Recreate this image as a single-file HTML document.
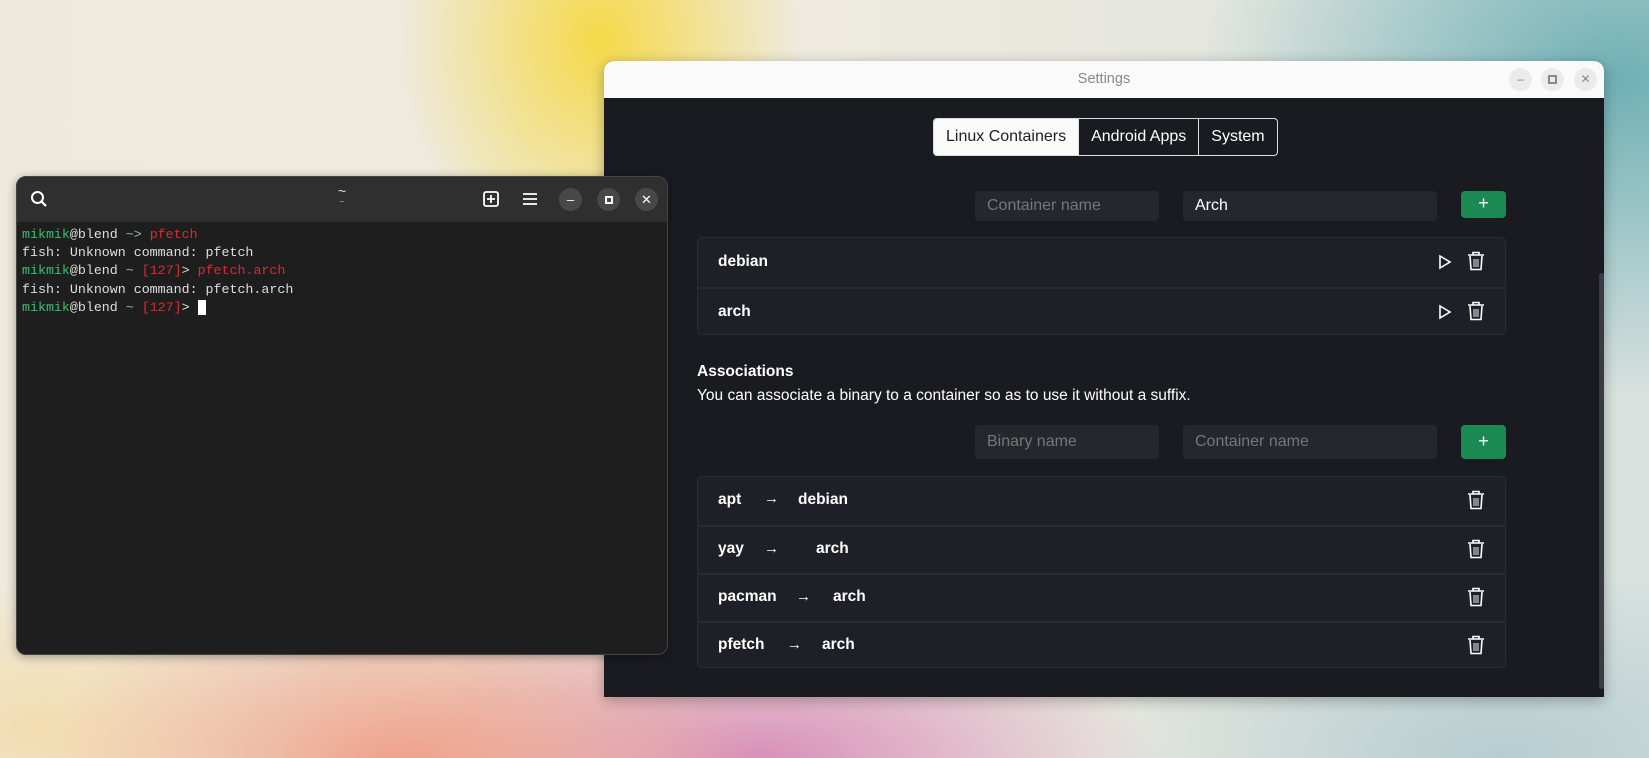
<!DOCTYPE html>
<html><head><meta charset="utf-8"><style>
*{margin:0;padding:0;box-sizing:border-box}
body{width:1649px;height:758px;overflow:hidden;position:relative;font-family:"Liberation Sans",sans-serif;
background:
radial-gradient(ellipse 200px 240px at 600px 40px,#f5d94a 0%,rgba(245,217,74,0) 100%),
radial-gradient(ellipse 420px 320px at 1620px 80px,#6fb0b5 0%,rgba(111,176,181,0) 100%),
radial-gradient(ellipse 360px 200px at 400px 770px,#ef9f86 0%,rgba(239,159,134,0) 100%),
radial-gradient(ellipse 400px 160px at 760px 760px,#d88fb8 0%,rgba(216,143,184,0) 100%),
radial-gradient(ellipse 400px 200px at 1500px 758px,#b6cdd0 0%,rgba(182,205,208,0) 100%),
radial-gradient(ellipse 250px 150px at 40px 730px,#f3ddb0 0%,rgba(243,221,176,0) 100%),
linear-gradient(90deg,#eeeadb 0%,#eeeadf 50%,#d9e2df 100%);}
.term{position:absolute;z-index:2;left:16px;top:176px;width:652px;height:479px;background:#1e1e1e;border-radius:10px;overflow:hidden;box-shadow:0 2px 10px rgba(0,0,0,.35);border:1px solid #444}
.th{height:45px;background:#2f2f2f;position:relative}
.cb{position:absolute;top:11px;width:23px;height:23px;border-radius:50%;background:#484848;color:#fff;font-size:13px;text-align:center;line-height:23px}
.tb{padding:4px 5px;font-family:"Liberation Mono",monospace;font-size:13.3px;line-height:18.2px;color:#dedede;white-space:pre}
.g{color:#33c173}.r{color:#e0282f}.d{color:#8fbf9c}
.set{position:absolute;z-index:1;left:604px;top:61px;width:1000px;height:636px;background:#1a1a21;border-radius:10px 10px 0 0;overflow:hidden;box-shadow:0 3px 14px rgba(0,0,0,.3)}
.sh{height:37px;background:#fafafa;text-align:center;line-height:37px;color:#888;font-size:14.5px;position:relative}
.wb{position:absolute;top:7px;width:23px;height:23px;border-radius:50%;background:#ebebeb;color:#888;font-size:12px;line-height:23px;text-align:center}
.tabs{position:absolute;left:329px;top:57px;height:38px;display:flex;border:1px solid #ddd;border-radius:4px;overflow:hidden;font-size:16px}
.tabs div{padding:0 12px;line-height:36px;color:#fff}
.tabs div+div{border-left:1px solid #ddd}
.inp{position:absolute;height:30px;background:#26262e;border-radius:4px;color:#fff;font-size:16px;line-height:30px;padding-left:12px}
.ph{color:#777}
.btn{position:absolute;width:45px;background:#1b8a52;border-radius:4px;color:#fff;text-align:center;font-size:18px}
.list{position:absolute;left:93px;width:809px;background:#1f1f27;border:1px solid #2c2c33;border-radius:5px}
.row{position:relative;border-top:2px solid #2a2a31;color:#fff;font-weight:bold;font-size:15.5px}
.row:first-child{border-top:none}
.row span{position:absolute}
.row span.a{font-size:15px;top:13px!important}
.ic{position:absolute}
.sb{position:absolute;left:995px;top:212px;width:5px;height:416px;background:#3a3a42;border-radius:3px}
</style></head><body>
<div class="term">
 <div class="th">
  <svg style="position:absolute;left:13px;top:13px" width="18" height="18" viewBox="0 0 18 18"><circle cx="7.5" cy="7.5" r="5.5" fill="none" stroke="#fff" stroke-width="2"/><line x1="11.5" y1="11.5" x2="16" y2="16" stroke="#fff" stroke-width="2.2"/></svg>
  <div style="position:absolute;left:321px;top:6px;color:#ddd;font-size:14px">~</div>
  <div style="position:absolute;left:322px;top:20px;color:#999;font-size:10px">~</div>
  <svg style="position:absolute;left:465px;top:13px" width="18" height="18" viewBox="0 0 18 18"><rect x="2" y="2" width="14" height="14" rx="2" fill="none" stroke="#fff" stroke-width="1.8"/><path d="M9 5v8M5 9h8" stroke="#fff" stroke-width="1.8"/></svg>
  <svg style="position:absolute;left:505px;top:14px" width="16" height="16" viewBox="0 0 16 16"><path d="M1 3h14M1 8h14M1 13h14" stroke="#fff" stroke-width="1.8"/></svg>
  <div class="cb" style="left:542px">–</div>
  <div class="cb" style="left:580px"><span style="display:inline-block;width:8px;height:8px;border:2px solid #fff;margin-top:7px"></span></div>
  <div class="cb" style="left:618px">✕</div>
 </div>
 <div class="tb"><span class="g">mikmik</span>@blend <span class="d">~&gt;</span> <span class="r">pfetch</span>
fish: Unknown command: pfetch
<span class="g">mikmik</span>@blend <span class="d">~</span> <span class="r">[127]</span>&gt; <span class="r">pfetch.arch</span>
fish: Unknown command: pfetch.arch
<span class="g">mikmik</span>@blend <span class="d">~</span> <span class="r">[127]</span>&gt; <span style="background:#fff"> </span></div>
</div>

<div class="set">
 <div class="sh">Settings
  <div class="wb" style="left:905px">–</div>
  <div class="wb" style="left:937px"><span style="display:inline-block;width:9px;height:9px;border:2px solid #888;margin-top:7px"></span></div>
  <div class="wb" style="left:970px">✕</div>
 </div>
 <div class="tabs"><div style="background:#fafafa;color:#222">Linux Containers</div><div>Android Apps</div><div>System</div></div>
 <div class="inp" style="left:371px;top:130px;width:184px"><span class="ph">Container name</span></div>
 <div class="inp" style="left:579px;top:130px;width:254px">Arch</div>
 <div class="btn" style="left:857px;top:130px;height:27px;line-height:25px">+</div>
 <div class="list" style="top:176px;height:98px">
  <div class="row" style="height:49px"><span style="left:20px;top:15px">debian</span>
   <svg class="ic" style="left:740px;top:16px" width="14" height="16" viewBox="0 0 14 16"><path d="M2 2L12 8 2 14Z" fill="none" stroke="#fff" stroke-width="1.6"/></svg>
   <svg class="ic" style="left:769px;top:13px" width="18" height="20" viewBox="0 0 18 20"><path d="M1 4h16M6 4V1.5h6V4" fill="none" stroke="#fff" stroke-width="1.6"/><path d="M3 5l1 13.5h10L15 5" fill="none" stroke="#fff" stroke-width="1.6"/><path d="M7 8v8M9 8v8M11 8v8" stroke="#ccc" stroke-width="1.2"/></svg></div>
  <div class="row" style="height:47px"><span style="left:20px;top:14px">arch</span>
   <svg class="ic" style="left:740px;top:15px" width="14" height="16" viewBox="0 0 14 16"><path d="M2 2L12 8 2 14Z" fill="none" stroke="#fff" stroke-width="1.6"/></svg>
   <svg class="ic" style="left:769px;top:12px" width="18" height="20" viewBox="0 0 18 20"><path d="M1 4h16M6 4V1.5h6V4" fill="none" stroke="#fff" stroke-width="1.6"/><path d="M3 5l1 13.5h10L15 5" fill="none" stroke="#fff" stroke-width="1.6"/><path d="M7 8v8M9 8v8M11 8v8" stroke="#ccc" stroke-width="1.2"/></svg></div>
 </div>
 <div style="position:absolute;left:93px;top:302px;color:#fff;font-weight:bold;font-size:15.5px">Associations</div>
 <div style="position:absolute;left:93px;top:326px;color:#fff;font-size:15.5px">You can associate a binary to a container so as to use it without a suffix.</div>
 <div class="inp" style="left:371px;top:364px;width:184px;height:34px;line-height:34px"><span class="ph">Binary name</span></div>
 <div class="inp" style="left:579px;top:364px;width:254px;height:34px;line-height:34px"><span class="ph">Container name</span></div>
 <div class="btn" style="left:857px;top:364px;height:34px;line-height:32px">+</div>
 <div class="list" style="top:415px;height:192px">
  <div class="row" style="height:48px"><span style="left:20px;top:14px">apt</span><span class="a" style="left:66px">→</span><span style="left:100px;top:14px">debian</span>
   <svg class="ic" style="left:769px;top:13px" width="18" height="20" viewBox="0 0 18 20"><path d="M1 4h16M6 4V1.5h6V4" fill="none" stroke="#fff" stroke-width="1.6"/><path d="M3 5l1 13.5h10L15 5" fill="none" stroke="#fff" stroke-width="1.6"/><path d="M7 8v8M9 8v8M11 8v8" stroke="#ccc" stroke-width="1.2"/></svg></div>
  <div class="row" style="height:48px"><span style="left:20px;top:13px">yay</span><span class="a" style="left:66px">→</span><span style="left:118px;top:13px">arch</span>
   <svg class="ic" style="left:769px;top:12px" width="18" height="20" viewBox="0 0 18 20"><path d="M1 4h16M6 4V1.5h6V4" fill="none" stroke="#fff" stroke-width="1.6"/><path d="M3 5l1 13.5h10L15 5" fill="none" stroke="#fff" stroke-width="1.6"/><path d="M7 8v8M9 8v8M11 8v8" stroke="#ccc" stroke-width="1.2"/></svg></div>
  <div class="row" style="height:48px"><span style="left:20px;top:13px">pacman</span><span class="a" style="left:98px">→</span><span style="left:135px;top:13px">arch</span>
   <svg class="ic" style="left:769px;top:12px" width="18" height="20" viewBox="0 0 18 20"><path d="M1 4h16M6 4V1.5h6V4" fill="none" stroke="#fff" stroke-width="1.6"/><path d="M3 5l1 13.5h10L15 5" fill="none" stroke="#fff" stroke-width="1.6"/><path d="M7 8v8M9 8v8M11 8v8" stroke="#ccc" stroke-width="1.2"/></svg></div>
  <div class="row" style="height:46px"><span style="left:20px;top:13px">pfetch</span><span class="a" style="left:89px">→</span><span style="left:124px;top:13px">arch</span>
   <svg class="ic" style="left:769px;top:12px" width="18" height="20" viewBox="0 0 18 20"><path d="M1 4h16M6 4V1.5h6V4" fill="none" stroke="#fff" stroke-width="1.6"/><path d="M3 5l1 13.5h10L15 5" fill="none" stroke="#fff" stroke-width="1.6"/><path d="M7 8v8M9 8v8M11 8v8" stroke="#ccc" stroke-width="1.2"/></svg></div>
 </div>
 <div class="sb"></div>
</div>
</body></html>
